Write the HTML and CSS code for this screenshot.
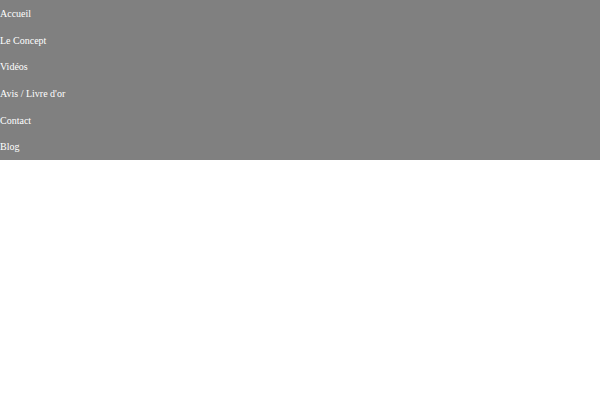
FILE: index.html
```html
<!DOCTYPE html>
<html lang="fr">
<head>
<meta charset="utf-8">
<link rel="stylesheet" href="styles.css">
</head>
<body>
<nav class="menu">
  <ul class="menu-list">
    <li class="menu-item"><a href="#">Accueil</a></li>
    <li class="menu-item"><a href="#">Le Concept</a></li>
    <li class="menu-item"><a href="#">Vidéos</a></li>
    <li class="menu-item"><a href="#">Avis / Livre d'or</a></li>
    <li class="menu-item"><a href="#">Contact</a></li>
    <li class="menu-item"><a href="#">Blog</a></li>
  </ul>
</nav>
</body>
</html>
```
FILE: styles.css
```css
html, body {
  margin: 0;
  padding: 0;
  background: #ffffff;
}
.menu {
  background: #808080;
  height: 160px;
}
.menu-list {
  list-style: none;
  margin: 0;
  padding: 0;
  height: 100%;
  display: flex;
  flex-direction: column;
}
.menu-item {
  flex: 1;
  display: flex;
  align-items: center;
}
.menu-item a {
  color: #ffffff;
  text-decoration: none;
  font-family: "Liberation Serif", serif;
  font-size: 10px;
}
```
